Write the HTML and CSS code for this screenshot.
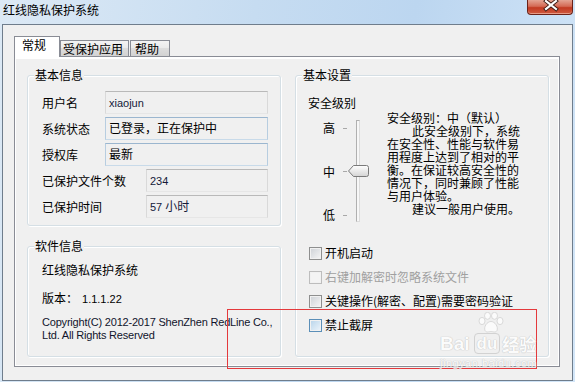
FILE: index.html
```html
<!DOCTYPE html>
<html lang="zh-CN">
<head>
    <meta charset="UTF-8">
    <title>红线隐私保护系统</title>
    <link rel="stylesheet" href="styles.css">
</head>
<body>
    <div class="window">
        <div class="titlebar">
            <span class="title">红线隐私保护系统</span>
            <div class="close">
                <svg width="46" height="14" viewBox="0 0 46 14">
                    <path d="M18 1 L28 9 M28 1 L18 9" stroke="#3b1a14" stroke-width="4" stroke-linecap="square"/>
                    <path d="M18 1 L28 9 M28 1 L18 9" stroke="#fff" stroke-width="2.2" stroke-linecap="square"/>
                </svg>
            </div>
        </div>

        <div class="client">
            <div class="tabs">
                <div class="tab active">常规</div>
                <div class="tab t-apps">受保护应用</div>
                <div class="tab t-help">帮助</div>
            </div>

            <div class="panel">
                <div class="col">
                    <fieldset class="group info">
                        <legend>基本信息</legend>
                        <div class="body">
                            <div class="row"><span>用户名</span><div class="field"><span class="latin">xiaojun</span></div></div>
                            <div class="row"><span>系统状态</span><div class="field blue">已登录，正在保护中</div></div>
                            <div class="row"><span>授权库</span><div class="field blue">最新</div></div>
                            <div class="row"><span>已保护文件个数</span><div class="field narrow"><span class="latin">234</span></div></div>
                            <div class="row"><span>已保护时间</span><div class="field narrow"><span class="latin">57 </span>小时</div></div>
                        </div>
                    </fieldset>

                    <fieldset class="group soft">
                        <legend>软件信息</legend>
                        <div class="body">
                            <p>红线隐私保护系统</p>
                            <p class="version">版本：<span class="latin ver-num">1.1.1.22</span></p>
                            <p class="latin copy">Copyright(C) 2012-2017 ShenZhen RedLine Co.,<br>Ltd. All Rights Reserved</p>
                        </div>
                    </fieldset>
                </div>

                <fieldset class="group settings">
                    <legend>基本设置</legend>
                    <div class="body">
                        <div class="level-title">安全级别</div>
                        <div class="scale">
                            <div class="slider">
                                <div class="levels">
                                    <div class="level"><span>高</span><i class="tick"></i></div>
                                    <div class="level"><span>中</span><i class="tick"></i></div>
                                    <div class="level"><span>低</span><i class="tick"></i></div>
                                </div>
                                <div class="track"></div>
                                <svg class="thumb" width="21" height="12" viewBox="0 0 21 12">
                                    <defs>
                                        <linearGradient id="tg" x1="0" y1="0" x2="0" y2="1">
                                            <stop offset="0" stop-color="#ffffff"/>
                                            <stop offset="1" stop-color="#d4d4d4"/>
                                        </linearGradient>
                                    </defs>
                                    <path d="M0.5 6 L5.5 0.5 H18.5 Q20.5 0.5 20.5 2.5 V9.5 Q20.5 11.5 18.5 11.5 H5.5 Z" fill="url(#tg)" stroke="#7a7a7a"/>
                                </svg>
                            </div>
                            <div class="desc">
                                <span>安全级别：中（默认）</span>
                                <span class="indent">此安全级别下，系统</span>
                                <span>在安全性、性能与软件易</span>
                                <span>用程度上达到了相对的平</span>
                                <span>衡。在保证较高安全性的</span>
                                <span>情况下，同时兼顾了性能</span>
                                <span>与用户体验。</span>
                                <span class="indent">建议一般用户使用。</span>
                            </div>
                        </div>

                        <div class="opts">
                            <label class="opt"><i class="check"></i>开机启动</label>
                            <label class="opt disabled"><i class="check"></i>右键加解密时忽略系统文件</label>
                            <label class="opt"><i class="check"></i>关键操作(解密、配置)需要密码验证</label>
                            <label class="opt"><i class="check hot"></i>禁止截屏</label>
                        </div>
                    </div>
                </fieldset>
            </div>
        </div>

        <div class="mark"></div>

        <div class="watermark">
            <svg class="paw" width="28" height="21" viewBox="0 0 28 21">
                <g fill="#fff" stroke="#c8c8c8" stroke-width="0.8">
                    <ellipse cx="5" cy="9" rx="3" ry="3.6"/>
                    <ellipse cx="10.5" cy="3.8" rx="3" ry="3.5"/>
                    <ellipse cx="17.5" cy="3.8" rx="3" ry="3.5"/>
                    <ellipse cx="23" cy="9" rx="3" ry="3.6"/>
                    <path d="M14 9.5 C10 9.5 6.5 15 8 18.5 C9.5 21 12 19.5 14 19.5 C16 19.5 18.5 21 20 18.5 C21.5 15 18 9.5 14 9.5 Z"/>
                </g>
            </svg>
            <div class="brand"><span class="bai">Bai</span><span class="du">du</span><span class="jy">经验</span></div>
            <div class="url">jingyan.baidu.com</div>
        </div>
    </div>
</body>
</html>
```

FILE: styles.css
```css
body {
    margin: 0;
    font-family: "Noto Sans CJK SC", "Liberation Sans", sans-serif;
    font-size: 12px;
    line-height: 14px;
    color: #000;
}

.latin {
    font-family: "Liberation Sans", sans-serif;
    font-size: 11px;
}

.window {
    position: relative;
    width: 575px;
    height: 382px;
    overflow: hidden;
    background: linear-gradient(100deg, #dce9f5 0%, #c6dcf1 40%, #bcd6f0 65%, #d3e6f8 100%);
}

/* title bar */
.titlebar {
    height: 24px;
    display: flex;
    justify-content: space-between;
    align-items: flex-start;
}

.title {
    padding-left: 3px;
    margin-top: 3px;
}

.close {
    width: 46px;
    height: 15px;
    margin-right: 2px;
    box-sizing: border-box;
    border: 1px solid #6b2218;
    border-top: none;
    border-radius: 0 0 4px 4px;
    background: linear-gradient(#e4a493, #d46a55 45%, #c23a22 55%, #cf5a40);
    box-shadow: inset 0 -1px 0 #e79a86;
}

.close svg {
    display: block;
}

/* client area */
.client {
    margin-left: 2px;
    width: 571px;
    height: 357px;
    box-sizing: border-box;
    border: 1px solid #6f7d8c;
    background: #f0f0f0;
    padding: 11px 0 0 11px;
}

.tabs {
    display: flex;
    align-items: flex-end;
    height: 20px;
    position: relative;
    z-index: 1;
}

.tab {
    box-sizing: border-box;
    height: 16px;
    border: 1px solid #898c95;
    border-bottom: none;
    background: linear-gradient(#f3f3f3, #ebebeb 45%, #dddddd 50%, #d2d2d2);
    padding-top: 1px;
    white-space: nowrap;
}

.tab.active {
    width: 46px;
    height: 21px;
    margin-bottom: -1px;
    background: #fff;
    padding: 1px 0 0 7px;
}

.t-apps {
    width: 69px;
    padding-left: 2px;
}

.t-help {
    width: 40px;
    margin-left: 1px;
    padding-left: 4px;
}

.panel {
    width: 546px;
    height: 311px;
    box-sizing: border-box;
    border: 1px solid #898c95;
    box-shadow: inset 1px 2px 0 #fff, inset -1px -1px 0 #fff;
    padding: 11px 10px 9px 12px;
    display: grid;
    grid-template-columns: 254px 254px;
    column-gap: 14px;
}

.col {
    display: flex;
    flex-direction: column;
    gap: 13px;
}

/* group boxes */
.group {
    margin: 0;
    padding: 0;
    min-width: 0;
    border: 1px solid #d5dfe5;
    border-radius: 3px;
    box-shadow: inset 1px 1px 0 #fff, 1px 1px 0 #fff;
}

.group legend {
    margin-left: 6px;
    padding: 0 1px;
    line-height: 14px;
    background: #f0f0f0;
}

.info {
    height: 158px;
    box-sizing: border-box;
}

.soft {
    flex: 1;
}

.info .body {
    padding: 9px 12px 0 14px;
    display: flex;
    flex-direction: column;
    gap: 3px;
}

.row {
    display: flex;
    justify-content: space-between;
    align-items: center;
    height: 23px;
}

.field {
    box-sizing: border-box;
    width: 163px;
    height: 23px;
    padding-left: 3px;
    line-height: 20px;
    border: 1px solid;
    border-color: #b9b9b9 #d9d9d9 #e6e6e6 #d9d9d9;
    color: #141a3a;
}

.field.blue {
    border-color: #9bb6cf #b7cde0 #c8dae9 #b7cde0;
    color: #000;
}

.field.narrow {
    width: 122px;
}

.soft .body {
    padding: 10px 0 0 14px;
}

.soft p {
    margin: 0;
}

.version {
    margin-top: 14px !important;
}

.ver-num {
    margin-left: 4px;
}

.copy {
    margin-top: 10px !important;
    line-height: 13px;
    letter-spacing: -0.2px;
    white-space: nowrap;
    color: #10142c;
}

/* basic settings */
.settings .body {
    padding: 14px 0 0 12px;
}

.scale {
    display: flex;
}

.slider {
    position: relative;
    width: 79px;
    height: 112px;
    display: flex;
}

.levels {
    margin-left: 15px;
    padding-top: 11px;
    display: flex;
    flex-direction: column;
    justify-content: space-between;
}

.level {
    display: flex;
    align-items: center;
}

.tick {
    width: 4px;
    height: 1px;
    margin-left: 8px;
    background: #a8a8a8;
}

.track {
    margin: 10px 0 0 9px;
    width: 4px;
    height: 102px;
    box-sizing: border-box;
    border: 1px solid;
    border-color: #b0b0b0 #dcdcdc #dcdcdc #b0b0b0;
    background: #f7f7f7;
}

.thumb {
    position: absolute;
    left: 40px;
    top: 55px;
}

.desc {
    margin-top: 1px;
    line-height: 13px;
    display: flex;
    flex-direction: column;
}

.desc .indent {
    padding-left: 25px;
}

.opts {
    margin-top: 19px;
    display: flex;
    flex-direction: column;
}

.opt {
    height: 24px;
    display: flex;
    align-items: center;
}

.check {
    width: 13px;
    height: 13px;
    box-sizing: border-box;
    margin: 0 3px 0 1px;
    border: 1px solid #8e8f8f;
    background: linear-gradient(135deg, #cdd1d6, #f6f6f6);
    box-shadow: inset 0 0 0 1px #f1f1f1;
}

.opt.disabled {
    color: #a0a0a0;
}

.opt.disabled .check {
    border-color: #bdbdbd;
    background: #f4f4f4;
}

.check.hot {
    border-color: #5b8fb8;
    background: linear-gradient(135deg, #b6d3ea, #eef5fb);
}

/* screenshot annotation */
.mark {
    position: absolute;
    left: 227px;
    top: 309px;
    width: 310px;
    height: 60px;
    box-sizing: border-box;
    border: 1px solid #e4393c;
}

.watermark {
    position: absolute;
    left: 440px;
    top: 312px;
    width: 110px;
    display: flex;
    flex-direction: column;
    align-items: flex-start;
    color: #fff;
    opacity: 0.75;
    text-shadow: 0 0 1px #b4b4b4, 0 0 1px #b4b4b4;
}

.paw {
    margin-left: 37px;
}

.brand {
    display: flex;
    align-items: center;
    font-family: "Liberation Sans", sans-serif;
    font-weight: bold;
    font-size: 19px;
    line-height: 19px;
}

.du {
    margin-left: 4px;
    padding: 0 2px;
    border: 1px solid #c8c8c8;
    border-radius: 4px;
    font-size: 17px;
}

.jy {
    margin-left: 2px;
    font-family: "Noto Sans CJK SC", sans-serif;
    font-size: 17px;
}

.url {
    margin-top: 3px;
    font-family: "Liberation Sans", sans-serif;
    font-size: 11px;
    line-height: 12px;
    letter-spacing: 0.5px;
}
```
